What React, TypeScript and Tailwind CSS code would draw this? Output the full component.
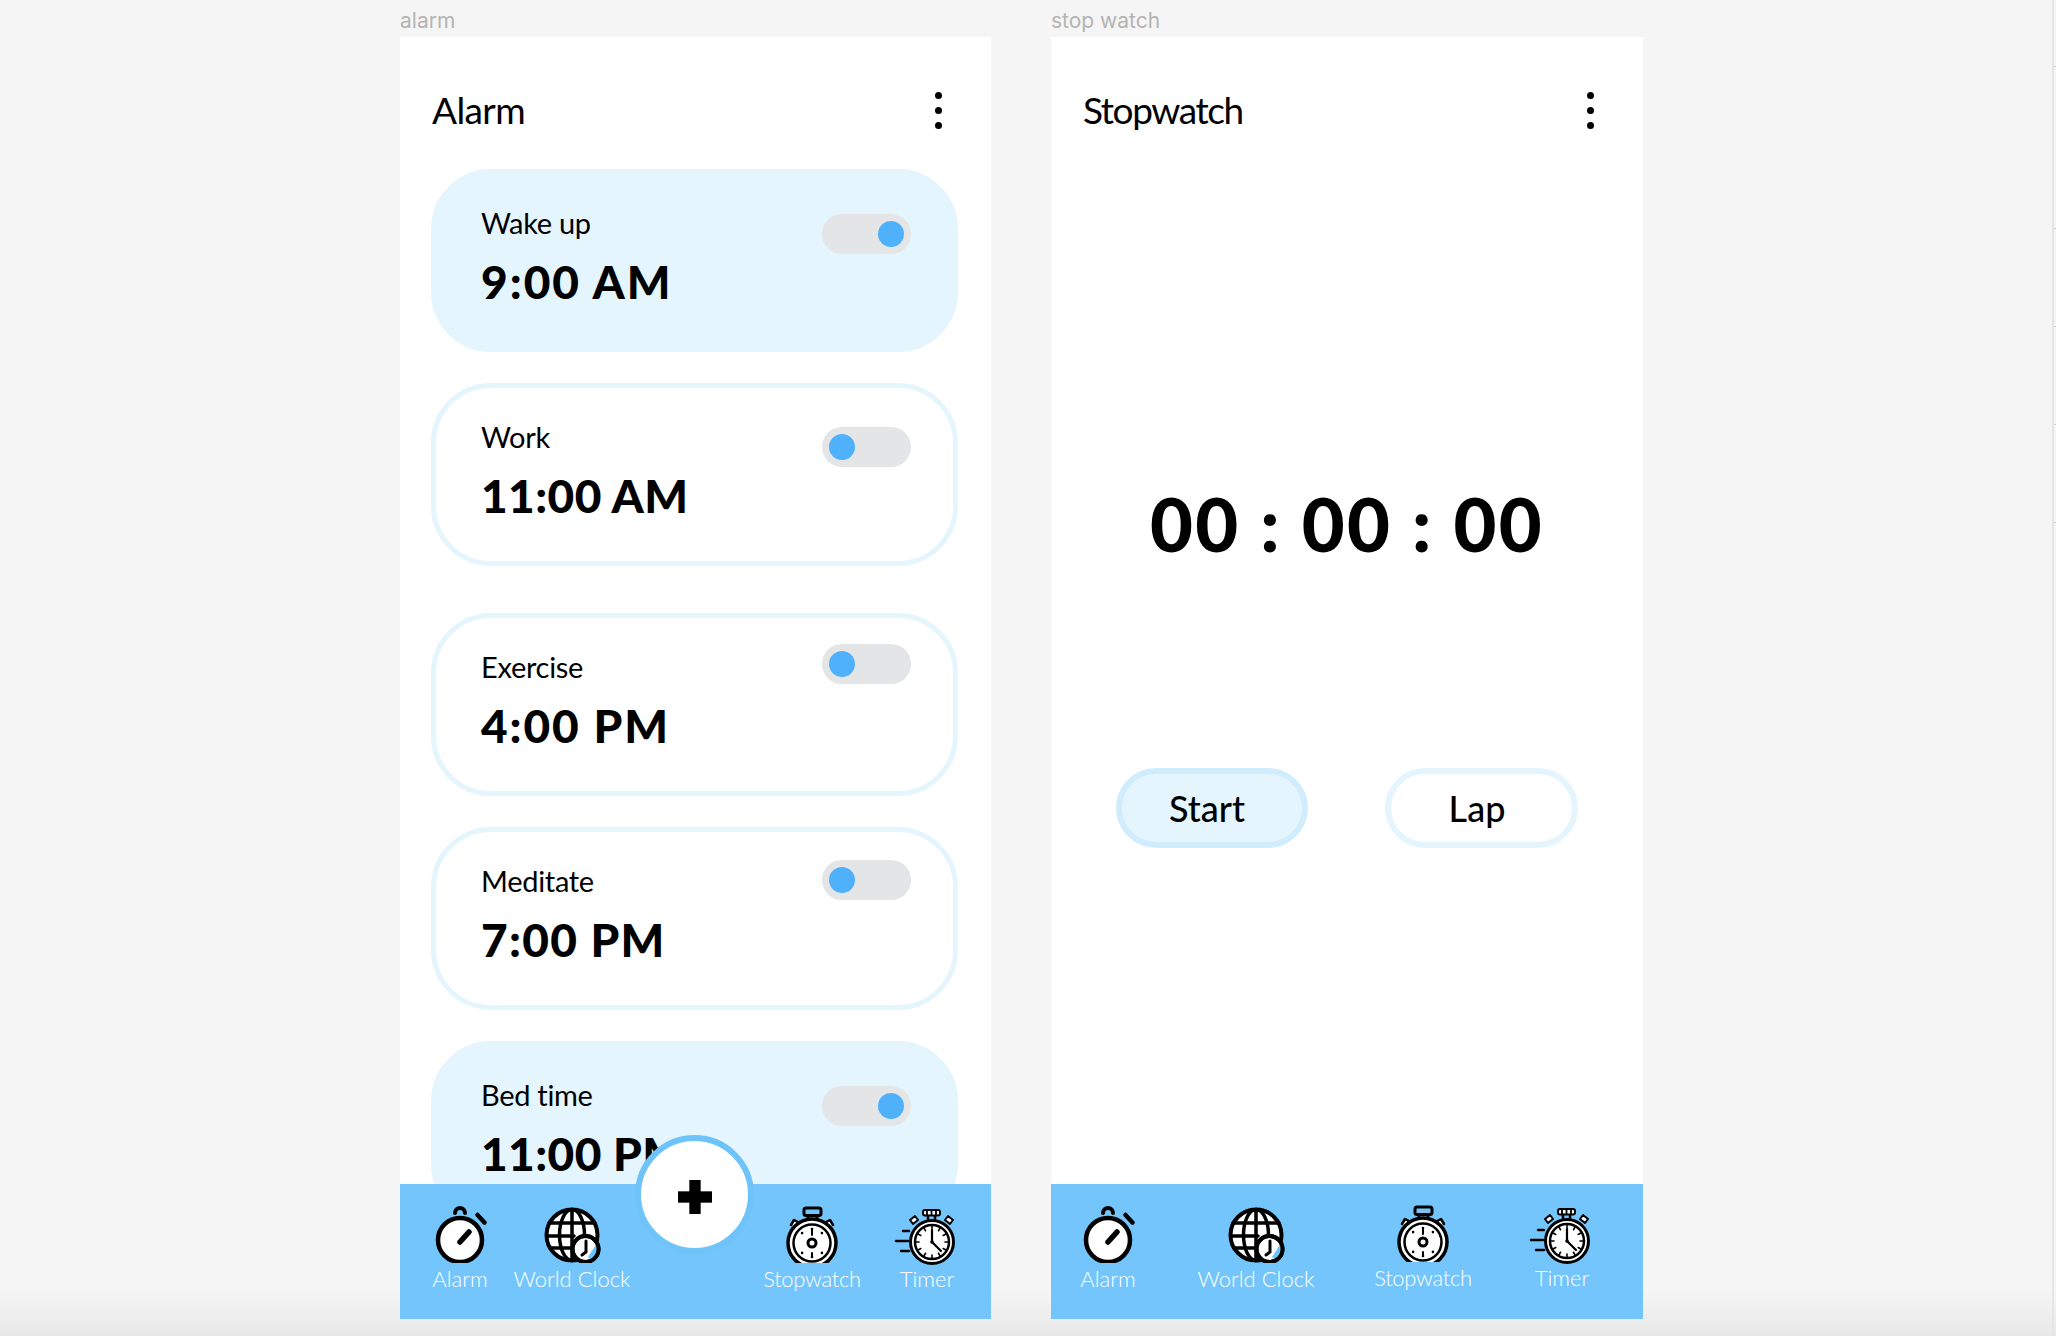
import React from "react";

const FONT = "font-['Lato','Noto_Sans',sans-serif]";

function AlarmIcon() {
  return (
    <svg width="60" height="60" viewBox="0 0 60 60" fill="none" stroke="#000" strokeLinecap="round">
      <circle cx="30" cy="37" r="22" fill="#fff" strokeWidth="4.5" />
      <path d="M25 10A5 5 0 0 1 35 10" strokeWidth="4" />
      <path d="M47.5 12L54.5 19.5" strokeWidth="4.5" />
      <path d="M30 39L39 29" strokeWidth="5.5" />
    </svg>
  );
}

function GlobeIcon() {
  return (
    <svg width="60" height="60" viewBox="0 0 60 60" fill="none" stroke="#000" strokeLinecap="round">
      <circle cx="30" cy="32" r="25.5" fill="#fff" strokeWidth="4" />
      <ellipse cx="30" cy="32" rx="12.5" ry="25.5" strokeWidth="3.5" />
      <path d="M30 7V56M7 20H53M5 33H32M8 45H28" strokeWidth="3.5" />
      <circle cx="43.5" cy="46" r="13" fill="#fff" strokeWidth="4" />
      <path d="M55 40A13 13 0 0 1 49 57L46 54Z" fill="#6fc3fb" stroke="none" />
      <circle cx="43.5" cy="46" r="13" strokeWidth="4" />
      <path d="M44 38V49L40 52" strokeWidth="3" />
    </svg>
  );
}

function StopwatchIcon() {
  const dots = [45, 90, 135, 225, 270, 315];
  return (
    <svg width="60" height="60" viewBox="0 0 60 60" fill="none" stroke="#000" strokeLinecap="round" strokeLinejoin="round">
      <rect x="22" y="5" width="17" height="7.5" rx="2" strokeWidth="3" />
      <path d="M26 12.5V17M35 12.5V17" strokeWidth="3" />
      <path d="M9 22L12 17L16 19L14 23M51 22L48 17L44 19L46 23" fill="#fff" strokeWidth="2.5" />
      <circle cx="30" cy="40" r="24" fill="#fff" strokeWidth="3.5" />
      <circle cx="30" cy="40" r="18.5" strokeWidth="2.5" />
      <circle cx="30" cy="40" r="4" strokeWidth="3" />
      <path d="M30 26V32M30 50V54" strokeWidth="2" />
      {dots.map((a) => (
        <circle
          key={a}
          cx={30 + 14 * Math.cos((a * Math.PI) / 180)}
          cy={40 + 14 * Math.sin((a * Math.PI) / 180)}
          r="1.3"
          fill="#000"
          stroke="none"
        />
      ))}
    </svg>
  );
}

function TimerIcon() {
  const ticks = Array.from({ length: 12 }, (_, i) => i * 30);
  return (
    <svg width="60" height="60" viewBox="0 0 60 60" fill="none" stroke="#000" strokeLinecap="round" strokeLinejoin="round" className="overflow-visible">
      <rect x="26" y="7" width="17" height="5.5" rx="2" fill="#fff" strokeWidth="2" />
      <path d="M30 7.5V12M34.5 7.5V12M39 7.5V12" strokeWidth="1.8" />
      <path d="M31 13V18M38 13V18" strokeWidth="2.5" />
      <path d="M13 17L18 13L21 17L16 21ZM56 17L51 13L48 17L53 21Z" fill="#fff" strokeWidth="2" />
      <circle cx="35" cy="39" r="21.5" fill="#fff" strokeWidth="3" />
      <circle cx="35" cy="39" r="17" strokeWidth="2.5" />
      {ticks.map((a) => {
        const c = Math.cos((a * Math.PI) / 180);
        const s = Math.sin((a * Math.PI) / 180);
        return <path key={a} d={`M${35 + 13 * c} ${39 + 13 * s}L${35 + 16 * c} ${39 + 16 * s}`} strokeWidth="1.6" />;
      })}
      <path d="M35 39V27M35 39L44 48" strokeWidth="2.2" />
      <circle cx="35" cy="39" r="1.8" fill="#000" stroke="none" />
      <path d="M6 28H12M-1 38H11M4 48H12" strokeWidth="2.4" />
    </svg>
  );
}

function NavItem({ icon, label, w, top, tracking = "" }: { icon: React.ReactNode; label: string; w: string; top: string; tracking?: string }) {
  return (
    <div className={`flex flex-col items-center ${w} ${top}`}>
      <div className="h-[59px] w-[60px]">{icon}</div>
      <span className={`text-[22px] leading-[34px] font-light text-white whitespace-nowrap ${tracking}`}>{label}</span>
    </div>
  );
}

function Dots() {
  return (
    <div className="flex flex-col gap-[8px]">
      <span className="h-[7px] w-[7px] rounded-full bg-black" />
      <span className="h-[7px] w-[7px] rounded-full bg-black" />
      <span className="h-[7px] w-[7px] rounded-full bg-black" />
    </div>
  );
}

function Header({ title, tracking }: { title: string; tracking: string }) {
  return (
    <div className="flex h-[132px] items-center justify-between pt-[14px] pl-[32px] pr-[49px]">
      <h1 className={`-mt-[1px] text-[37px] leading-[48px] font-normal text-black ${tracking}`}>{title}</h1>
      <Dots />
    </div>
  );
}

function Toggle({ on, top }: { on: boolean; top: string }) {
  return (
    <div className={`flex h-[40px] w-[89px] items-center rounded-full bg-[#e4e5e7] ${top} ${on ? "justify-end pr-[7px]" : "justify-start pl-[7px]"}`}>
      <span className="h-[26px] w-[26px] rounded-full bg-[#4fb0fb]" />
    </div>
  );
}

function Card({ label, time, on, filled, toggleTop, gap, tracking }: { label: string; time: string; on: boolean; filled: boolean; toggleTop: string; gap: string; tracking: string }) {
  return (
    <div
      className={`flex h-[183px] w-[527px] shrink-0 justify-between rounded-[60px] border-[5px] border-[#e4f5fe] pl-[45px] pr-[42px] ${gap} ${filled ? "bg-[#e4f5fe]" : "bg-white"}`}
    >
      <div className="pt-[31px]">
        <div className="text-[29px] leading-[36px] font-normal tracking-[-0.3px] text-black">{label}</div>
        <div className={`mt-[14px] text-[46px] leading-[54px] font-black text-black whitespace-nowrap ${tracking}`}>{time}</div>
      </div>
      <Toggle on={on} top={toggleTop} />
    </div>
  );
}

function Nav({ children }: { children: React.ReactNode }) {
  return <div className="absolute inset-x-0 bottom-0 flex h-[135px] bg-[#6fc3fb]/[0.97] pt-[19px]">{children}</div>;
}

function Phone({ label, w, children }: { label: string; w: string; children: React.ReactNode }) {
  return (
    <div className={`flex flex-col ${w}`}>
      <div className="flex h-[37px] items-center pt-[5px] font-['Inter',sans-serif] text-[21px] leading-[24px] text-[#b4b4b4]">{label}</div>
      <div className="relative h-[1282px] overflow-hidden bg-white">{children}</div>
    </div>
  );
}

export default function App() {
  return (
    <div className={`relative flex h-[1336px] w-full gap-[60px] overflow-hidden bg-[linear-gradient(to_bottom,#f5f5f5_0,#f5f5f5_1290px,#e8e8e8_1336px)] pl-[400px] ${FONT}`}>
      <Phone label="alarm" w="w-[591px]">
        <Header title="Alarm" tracking="tracking-[-0.6px]" />
        <div className="flex flex-col pl-[31px]">
          <Card label="Wake up" time="9:00 AM" on filled toggleTop="mt-[40px]" gap="" tracking="tracking-[2px]" />
          <Card label="Work" time="11:00 AM" on={false} filled={false} toggleTop="mt-[39px]" gap="mt-[31px]" tracking="tracking-[0.4px]" />
          <Card label="Exercise" time="4:00 PM" on={false} filled={false} toggleTop="mt-[26px]" gap="mt-[47px]" tracking="tracking-[1.9px]" />
          <Card label="Meditate" time="7:00 PM" on={false} filled={false} toggleTop="mt-[28px]" gap="mt-[31px]" tracking="tracking-[1.3px]" />
          <Card label="Bed time" time="11:00 PM" on filled toggleTop="mt-[40px]" gap="mt-[31px]" tracking="tracking-[0.4px]" />
        </div>
        <Nav>
          <NavItem icon={<AlarmIcon />} label="Alarm" w="w-[120px]" top="" />
          <NavItem icon={<GlobeIcon />} label="World Clock" w="w-[104px]" top="" />
          <div className="w-[128px]" />
          <NavItem icon={<StopwatchIcon />} label="Stopwatch" w="w-[120px]" top="" tracking="tracking-[-0.3px]" />
          <NavItem icon={<TimerIcon />} label="Timer" w="w-[110px]" top="" />
        </Nav>
        <button className="absolute left-[235px] top-[1098px] flex h-[119px] w-[119px] items-center justify-center rounded-full border-[6px] border-[#6fc3fb] bg-white">
          <svg width="34" height="34" viewBox="0 0 33 33" fill="#000" className="mt-[4px]">
            <rect x="11" y="0" width="11" height="33" />
            <rect x="0" y="11" width="33" height="11" />
          </svg>
        </button>
      </Phone>

      <Phone label="stop watch" w="w-[592px]">
        <Header title="Stopwatch" tracking="tracking-[-1.4px]" />
        <div className="mt-[315px] text-center text-[74px] leading-[80px] font-black tracking-[2.3px] text-black whitespace-nowrap">00 : 00 : 00</div>
        <div className="mt-[204px] flex gap-[77px] pl-[65px]">
          <button className="flex h-[80px] w-[192px] items-center justify-center rounded-full border-[6px] border-[#d1ecfd] bg-[#e4f5fe] pr-[10px] text-[36px] font-medium text-black">Start</button>
          <button className="flex h-[80px] w-[193px] items-center justify-center rounded-full border-[6px] border-[#e4f5fe] bg-white pr-[9px] text-[36px] font-medium text-black">Lap</button>
        </div>
        <Nav>
          <NavItem icon={<AlarmIcon />} label="Alarm" w="w-[114px]" top="" />
          <NavItem icon={<GlobeIcon />} label="World Clock" w="w-[182px]" top="" />
          <NavItem icon={<StopwatchIcon />} label="Stopwatch" w="w-[152px]" top="-mt-[1px]" tracking="tracking-[-0.3px]" />
          <NavItem icon={<TimerIcon />} label="Timer" w="w-[126px]" top="-mt-[1px]" />
        </Nav>
      </Phone>

      <div className="absolute bottom-0 right-[2px] top-0 w-[2px] bg-[#e5e5e5]" />
      <div className="absolute right-0 top-[66px] h-px w-[2px] bg-[#d4d4d4]" />
      <div className="absolute right-0 top-[228px] h-px w-[2px] bg-[#d4d4d4]" />
      <div className="absolute right-0 top-[326px] h-px w-[2px] bg-[#d4d4d4]" />
      <div className="absolute right-0 top-[424px] h-px w-[2px] bg-[#d4d4d4]" />
      <div className="absolute right-0 top-[522px] h-px w-[2px] bg-[#d4d4d4]" />
    </div>
  );
}
